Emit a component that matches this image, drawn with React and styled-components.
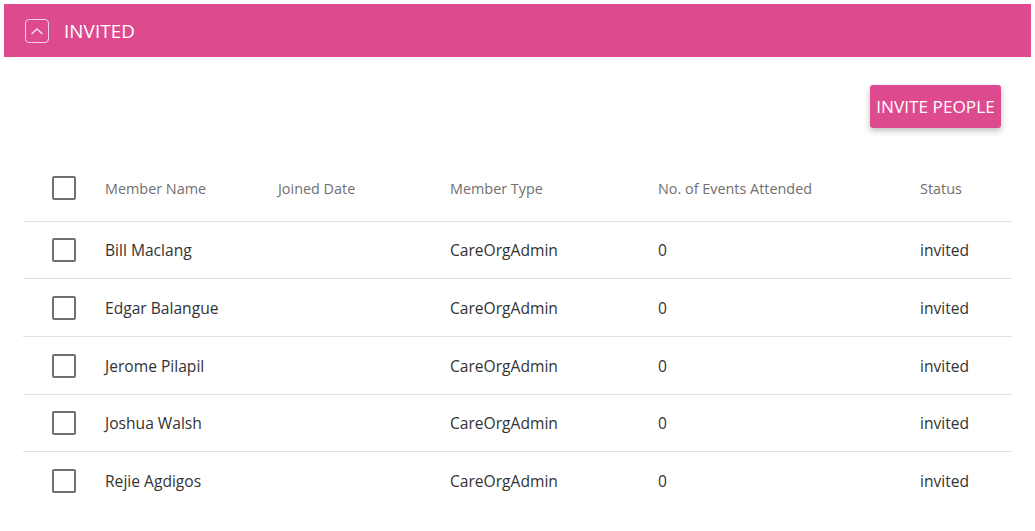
import React from "react";
import styled, { createGlobalStyle } from "styled-components";

const Global = createGlobalStyle`
  html, body { margin: 0; padding: 0; background: #fff; }
  body { font-family: "Open Sans", "Noto Sans", sans-serif; }
  * { box-sizing: border-box; }
`;

const Page = styled.div`
  padding: 4px;
`;

const SectionBar = styled.div`
  height: 53px;
  background: #dd4a8e;
  display: flex;
  align-items: center;
  padding-left: 21px;
  gap: 15px;
  color: #fff;
`;

const ToggleBox = styled.button`
  width: 24px;
  height: 24px;
  border: 1.5px solid rgba(255, 255, 255, 0.75);
  border-radius: 4px;
  background: transparent;
  display: flex;
  align-items: center;
  justify-content: center;
  padding: 0;
  margin-top: 1px;
`;

const SectionTitle = styled.span`
  font-size: 18.8px;
  letter-spacing: 0.1px;
`;

const Body = styled.div`
  padding: 28px 19px 0;
`;

const Actions = styled.div`
  display: flex;
  justify-content: flex-end;
  padding-right: 11px;
`;

const PrimaryButton = styled.button`
  height: 43px;
  width: 131px;
  padding: 0;
  background: #dd4a8e;
  color: #fff;
  border: none;
  border-radius: 3px;
  font-family: inherit;
  font-size: 17.2px;
  box-shadow: 0 3px 6px rgba(0, 0, 0, 0.25);
`;

const Table = styled.div`
  margin-top: 27px;
`;

const Row = styled.div`
  display: grid;
  grid-template-columns: 82px 173px 172px 208px 262px 1fr;
  align-items: center;
  height: ${(p) => p.$h}px;
  border-bottom: ${(p) => (p.$last ? "none" : "1px solid #e0e0e0")};
`;

const Cell = styled.div`
  font-size: ${(p) => (p.$head ? "14.4px" : "15.6px")};
  color: ${(p) => (p.$head ? "#707070" : "#333")};
  white-space: nowrap;
`;

const BoxCell = styled.div`
  padding-left: 29px;
  display: flex;
  align-items: center;
`;

const Check = styled.span`
  display: block;
  width: 24px;
  height: 24px;
  border: 2px solid #707070;
  border-radius: 2px;
`;

const members = [
  "Bill Maclang",
  "Edgar Balangue",
  "Jerome Pilapil",
  "Joshua Walsh",
  "Rejie Agdigos",
];
const heights = [57, 58, 58, 57, 58];

export default function App() {
  return (
    <Page>
      <Global />
      <SectionBar>
        <ToggleBox aria-label="collapse">
          <svg width="14" height="9" viewBox="0 0 14 9" fill="none">
            <path d="M1.5 7 L7 2 L12.5 7" stroke="rgba(255,255,255,0.85)" strokeWidth="1.3" />
          </svg>
        </ToggleBox>
        <SectionTitle>INVITED</SectionTitle>
      </SectionBar>
      <Body>
        <Actions>
          <PrimaryButton>INVITE PEOPLE</PrimaryButton>
        </Actions>
        <Table>
          <Row $h={67}>
            <BoxCell><Check /></BoxCell>
            <Cell $head>Member Name</Cell>
            <Cell $head>Joined Date</Cell>
            <Cell $head>Member Type</Cell>
            <Cell $head>No. of Events Attended</Cell>
            <Cell $head>Status</Cell>
          </Row>
          {members.map((m, i) => (
            <Row key={m} $h={heights[i]} $last={i === members.length - 1}>
              <BoxCell><Check /></BoxCell>
              <Cell>{m}</Cell>
              <Cell></Cell>
              <Cell>CareOrgAdmin</Cell>
              <Cell>0</Cell>
              <Cell>invited</Cell>
            </Row>
          ))}
        </Table>
      </Body>
    </Page>
  );
}
